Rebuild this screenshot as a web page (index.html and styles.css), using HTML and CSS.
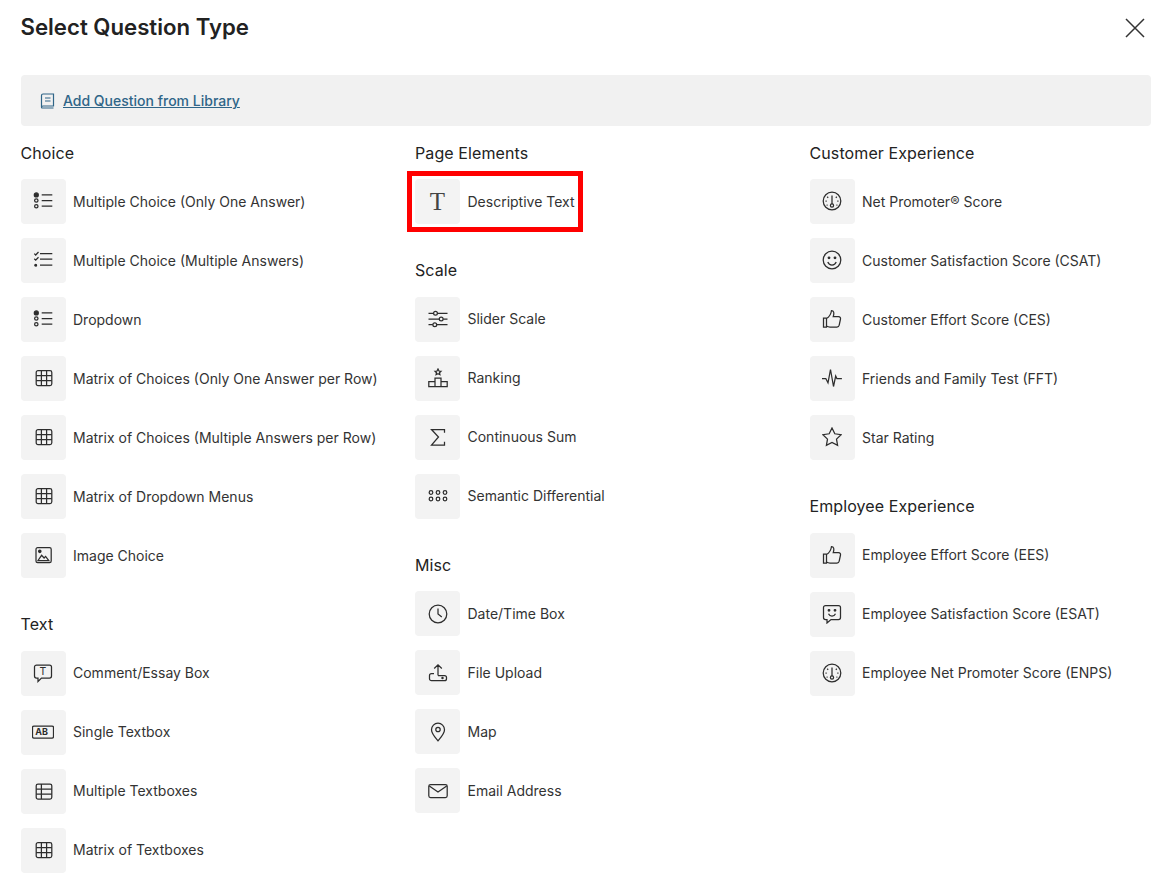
FILE: index.html
```html
<!DOCTYPE html>
<html lang="en">
<head>
    <meta charset="UTF-8">
    <meta name="viewport" content="width=device-width, initial-scale=1.0">
    <title>Select Question Type</title>
    <link rel="stylesheet" href="styles.css">
</head>
<body>
<svg class="sprite" width="0" height="0">
    <symbol id="i-radio" viewBox="0 0 20 20">
        <circle cx="3.300" cy="3.900" r="2" fill="currentColor"/><circle cx="3.300" cy="9.500" r="1.700"/><circle cx="3.300" cy="15.200" r="1.700"/>
        <path d="M8.700 3.800h10.600M8.700 9.500h10.600M8.700 15.200h10.600"/>
    </symbol>
    <symbol id="i-check" viewBox="0 0 20 20">
        <path d="M1.300 3.600l1.400 1.400L5.500 2M1.300 8.800l1.400 1.400 2.800-3M7 3.500h12.300M7 9h12.300M7 15.200h12.300"/>
        <circle cx="2.700" cy="15.200" r=".9" fill="currentColor"/>
    </symbol>
    <symbol id="i-grid" viewBox="0 0 20 20">
        <rect x="3.200" y="2.700" width="15.600" height="14.800" rx="1.800"/><path d="M8.400 2.700v14.800M13.600 2.700v14.800M3.200 7.600h15.600M3.200 12.600h15.600"/>
    </symbol>
    <symbol id="i-image" viewBox="0 0 20 20">
        <rect x="3" y="2.700" width="15.200" height="15" rx="1.600"/><circle cx="6.800" cy="6.300" r="1.200" fill="currentColor"/>
        <path d="M5 15.500l3.600-5.200 2.500 2.700 1.500-1.600 3.200 4.100z"/>
    </symbol>
    <symbol id="i-comment" viewBox="0 0 20 20">
        <path d="M3.500 2h13A2 2 0 0 1 18.500 4v9a2 2 0 0 1-2 2H8.500l-3.500 3.500V15H3.500a2 2 0 0 1-2-2V4a2 2 0 0 1 2-2z"/>
    </symbol>
    <symbol id="i-sliders" viewBox="0 0 20 20">
        <path d="M.5 4.300h5M9.500 4.300h10M.5 10h10.700M15.200 10h4.300M.5 15.700h4.300M8.800 15.700h10.700"/>
        <circle cx="7.500" cy="4.300" r="1.900"/><circle cx="13.200" cy="10" r="1.900"/><circle cx="6.800" cy="15.700" r="1.900"/>
    </symbol>
    <symbol id="i-rank" viewBox="0 0 20 20">
        <path d="M10 1l1 2 2 .3-1.500 1.400.4 2-1.900-1-1.900 1 .4-2L7 3.300 9 3z"/>
        <path d="M7 10h6v8.500H7zM.8 13.500H7v5H.8zM13 13.500h6.200v5H13z"/>
    </symbol>
    <symbol id="i-sum" viewBox="0 0 20 20">
        <path d="M16.500 5.800V2.500H3.500L10.500 10 3.500 18h13v-3.300"/>
    </symbol>
    <symbol id="i-dots" viewBox="0 0 20 20">
        <circle cx="3" cy="6.500" r="1.800"/><circle cx="10" cy="6.500" r="1.800"/><circle cx="17" cy="6.500" r="1.800"/>
        <circle cx="3" cy="13" r="1.800"/><circle cx="10" cy="13" r="1.800"/><circle cx="17" cy="13" r="1.800"/>
    </symbol>
    <symbol id="i-clock" viewBox="0 0 20 20">
        <circle cx="10" cy="10" r="8.800"/><path d="M10 4.500V10l3.800 3"/>
    </symbol>
    <symbol id="i-upload" viewBox="0 0 20 20">
        <path d="M10 12.500V2M6.200 5.500L10 1.800l3.800 3.700M6 10.500H3.500a2 2 0 0 0-2 2v3.200a2 2 0 0 0 2 2h13a2 2 0 0 0 2-2v-1.200a2 2 0 0 0-2-2H10"/>
        <circle cx="14.500" cy="15" r=".6" fill="currentColor"/>
    </symbol>
    <symbol id="i-pin" viewBox="0 0 20 20">
        <path d="M10 18.800C6.500 14.500 3.500 11.500 3.500 7.700a6.500 6.500 0 0 1 13 0c0 3.800-3 6.800-6.500 11.100z"/><circle cx="10" cy="7.500" r="2.200"/>
    </symbol>
    <symbol id="i-mail" viewBox="0 0 20 20">
        <rect x=".8" y="3.500" width="18.400" height="13" rx="1.800"/><path d="M1.300 5l8.700 6 8.700-6"/>
    </symbol>
    <symbol id="i-gauge" viewBox="0 0 20 20">
        <circle cx="10" cy="10" r="8.800"/><circle cx="10" cy="14.500" r="1.600"/>
        <path d="M10 13V4.500M5.200 5.800l1 1M14.800 5.800l-1 1M3.500 10h1.200M15.300 10h1.200M4.600 14h1M14.400 14h1"/>
    </symbol>
    <symbol id="i-smile" viewBox="0 0 20 20">
        <circle cx="10" cy="10" r="8.800"/><path d="M5.800 12c.8 2 2.300 3 4.200 3s3.400-1 4.200-3"/>
        <circle cx="7" cy="7.800" r=".8" fill="currentColor"/><circle cx="13" cy="7.800" r=".8" fill="currentColor"/>
    </symbol>
    <symbol id="i-thumb" viewBox="0 0 20 20">
        <path d="M1.500 9h3v9h-3zM4.500 9.500C7 8 9 5.500 9.500 1.500c2.200 0 3 2.500 1.800 6h5.200c1.500 0 2.300 1.200 2 2.500l-1.300 6.200c-.3 1.200-1 1.800-2.200 1.800H8c-1.500 0-2.500-.4-3.500-1"/>
    </symbol>
    <symbol id="i-pulse" viewBox="0 0 20 20">
        <path d="M0 10.500h3.800L6 14.800 8.500 1.500l3 17 2.200-10.500 1.200 2.500h5"/>
    </symbol>
    <symbol id="i-star" viewBox="0 0 20 20">
        <path d="M10 1l2.800 5.800 6.300.9-4.600 4.400 1.100 6.300L10 15.400l-5.600 3 1.100-6.300L.9 7.700l6.300-.9z"/>
    </symbol>
    <symbol id="i-esat" viewBox="0 0 20 20">
        <path d="M3.500 1.500h13a2 2 0 0 1 2 2v10a2 2 0 0 1-2 2H9l-4 3.500v-3.500H3.500a2 2 0 0 1-2-2v-10a2 2 0 0 1 2-2z"/>
        <path d="M6.500 9.800c.7 1.500 2 2.200 3.500 2.200s2.800-.7 3.500-2.200"/>
        <circle cx="7" cy="6.300" r=".8" fill="currentColor"/><circle cx="13" cy="6.300" r=".8" fill="currentColor"/>
    </symbol>
</svg>

<div class="page">
    <header class="top">
        <h1>Select Question Type</h1>
        <svg class="close" viewBox="0 0 20 20"><path d="M1 1l18 18M19 1L1 19"/></svg>
    </header>

    <div class="library">
        <svg class="book" viewBox="0 0 16 16"><path d="M2.500 14V2.500A1.500 1.500 0 0 1 4 1h10.500v12H4A1.500 1.500 0 0 0 2.500 14.500 .5.500 0 0 0 3 15h11.500M6 5h5.500M6 8h5.500"/></svg>
        <a href="#">Add Question from Library</a>
    </div>

    <main class="columns">
        <div class="col">
            <section>
                <h2>Choice</h2>
                <div class="row"><span class="tile"><svg><use href="#i-radio"/></svg></span>Multiple Choice (Only One Answer)</div>
                <div class="row"><span class="tile"><svg><use href="#i-check"/></svg></span>Multiple Choice (Multiple Answers)</div>
                <div class="row"><span class="tile"><svg><use href="#i-radio"/></svg></span>Dropdown</div>
                <div class="row"><span class="tile"><svg><use href="#i-grid"/></svg></span>Matrix of Choices (Only One Answer per Row)</div>
                <div class="row"><span class="tile"><svg><use href="#i-grid"/></svg></span>Matrix of Choices (Multiple Answers per Row)</div>
                <div class="row"><span class="tile"><svg><use href="#i-grid"/></svg></span>Matrix of Dropdown Menus</div>
                <div class="row"><span class="tile"><svg><use href="#i-image"/></svg></span>Image Choice</div>
            </section>
            <section>
                <h2>Text</h2>
                <div class="row"><span class="tile"><svg viewBox="0 0 20 20"><use href="#i-comment" width="20" height="20"/><text class="t-small" x="10" y="12.300">T</text></svg></span>Comment/Essay Box</div>
                <div class="row"><span class="tile"><svg class="wide" viewBox="0 0 22 14"><path d="M17 1h3a1.500 1.500 0 0 1 1.500 1.500v9A1.500 1.500 0 0 1 20 13h-3M17 13H2a1.500 1.500 0 0 1-1.500-1.500v-9A1.500 1.500 0 0 1 2 1h15"/><text class="t-ab" x="9.500" y="10.300">AB</text></svg></span>Single Textbox</div>
                <div class="row"><span class="tile"><svg viewBox="0 0 20 20"><rect x="3.200" y="3" width="15.600" height="15" rx="1.800"/><path d="M8.400 3v15M3.200 8h15.600M3.200 13h15.600"/></svg></span>Multiple Textboxes</div>
                <div class="row"><span class="tile"><svg><use href="#i-grid"/></svg></span>Matrix of Textboxes</div>
            </section>
        </div>

        <div class="col">
            <section>
                <h2>Page Elements</h2>
                <div class="row picked"><span class="tile"><span class="t-big">T</span></span>Descriptive Text</div>
            </section>
            <section>
                <h2>Scale</h2>
                <div class="row"><span class="tile"><svg><use href="#i-sliders"/></svg></span>Slider Scale</div>
                <div class="row"><span class="tile"><svg><use href="#i-rank"/></svg></span>Ranking</div>
                <div class="row"><span class="tile"><svg><use href="#i-sum"/></svg></span>Continuous Sum</div>
                <div class="row"><span class="tile"><svg><use href="#i-dots"/></svg></span>Semantic Differential</div>
            </section>
            <section>
                <h2>Misc</h2>
                <div class="row"><span class="tile"><svg><use href="#i-clock"/></svg></span>Date/Time Box</div>
                <div class="row"><span class="tile"><svg><use href="#i-upload"/></svg></span>File Upload</div>
                <div class="row"><span class="tile"><svg><use href="#i-pin"/></svg></span>Map</div>
                <div class="row"><span class="tile"><svg><use href="#i-mail"/></svg></span>Email Address</div>
            </section>
        </div>

        <div class="col">
            <section>
                <h2>Customer Experience</h2>
                <div class="row"><span class="tile"><svg><use href="#i-gauge"/></svg></span>Net Promoter® Score</div>
                <div class="row"><span class="tile"><svg><use href="#i-smile"/></svg></span>Customer Satisfaction Score (CSAT)</div>
                <div class="row"><span class="tile"><svg><use href="#i-thumb"/></svg></span>Customer Effort Score (CES)</div>
                <div class="row"><span class="tile"><svg><use href="#i-pulse"/></svg></span>Friends and Family Test (FFT)</div>
                <div class="row"><span class="tile"><svg><use href="#i-star"/></svg></span>Star Rating</div>
            </section>
            <section>
                <h2>Employee Experience</h2>
                <div class="row"><span class="tile"><svg><use href="#i-thumb"/></svg></span>Employee Effort Score (EES)</div>
                <div class="row"><span class="tile"><svg><use href="#i-esat"/></svg></span>Employee Satisfaction Score (ESAT)</div>
                <div class="row"><span class="tile"><svg><use href="#i-gauge"/></svg></span>Employee Net Promoter Score (ENPS)</div>
            </section>
        </div>
    </main>
</div>
</body>
</html>
```

FILE: styles.css
```css
body{
    margin: 0;
    background-color: white;
    color: #333;
    font-family: Inter, 'Noto Sans', sans-serif;
    font-size: 14px;
}
.sprite{
    position: absolute;
}
.page{
    padding: 0 5px 0 20.500px;
}
.top{
    display: flex;
    justify-content: space-between;
    align-items: center;
    height: 54px;
    margin-bottom: 21px;
}
h1{
    margin: 0 0 2px;
    font-size: 22.200px;
    font-weight: 600;
    color: #222;
}
.close{
    width: 20px;
    height: 20px;
    margin: 2px 6px 0 0;
    fill: none;
    stroke: #333;
    stroke-width: 1.5;
}
.library{
    display: flex;
    align-items: center;
    gap: 8px;
    height: 51px;
    padding-left: 18.500px;
    margin-bottom: 17.600px;
    background-color: #f1f1f1;
    border-radius: 4px;
}
.library a{
    color: #2f6588;
    font-weight: 500;
}
.book{
    width: 16px;
    height: 16px;
    fill: none;
    stroke: #2f6588;
    stroke-width: 1.2;
}
.columns{
    display: grid;
    grid-template-columns: 394.500px 394.500px 1fr;
}
section{
    display: flex;
    flex-direction: column;
    gap: 14px;
    margin-bottom: 37.150px;
}
h2{
    margin: 0 0 2.400px;
    font-size: 16px;
    line-height: 19px;
    font-weight: 400;
    letter-spacing: .1px;
    color: #222;
}
.row{
    display: flex;
    align-items: center;
    gap: 7.500px;
    height: 45px;
    width: fit-content;
    line-height: 17.900px;
    white-space: nowrap;
}
.picked{
    outline: 5px solid #f00;
    outline-offset: 3px;
}
.tile{
    display: flex;
    align-items: center;
    justify-content: center;
    width: 45px;
    height: 45px;
    flex: none;
    background-color: #f3f3f3;
    border-radius: 4px;
}
.tile svg{
    width: 20px;
    height: 20px;
    fill: none;
    color: #2d2d2d;
    stroke: #2d2d2d;
    stroke-width: 1.250;
}
.tile svg.wide{
    width: 22px;
    height: 14px;
}
.tile text{
    fill: #2d2d2d;
    stroke: none;
    text-anchor: middle;
}
.t-small{
    font-size: 10.500px;
    font-weight: 400;
}
.t-ab{
    font-size: 9px;
    font-weight: 700;
}
.t-big{
    font-family: 'Liberation Serif', serif;
    font-size: 25px;
    line-height: 1;
    color: #444;
}
```
